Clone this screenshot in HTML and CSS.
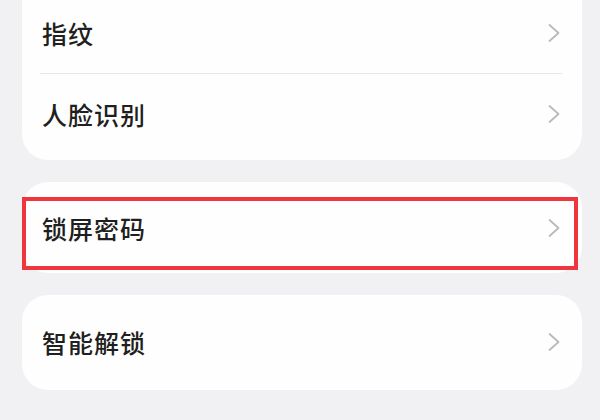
FILE: index.html
```html
<!DOCTYPE html>
<html>

<head>
    <title>安全设置</title>
    <link rel="stylesheet" href="styles.css">
</head>

<body>
    <div class="list">
        <div class="card card-top">
            <div class="row row-first">
                <span class="label">指纹</span>
                <svg class="chev" viewBox="0 0 14 20"><path d="M2.5 2 L11.5 10 L2.5 18" /></svg>
            </div>
            <div class="divider"></div>
            <div class="row row-second">
                <span class="label">人脸识别</span>
                <svg class="chev" viewBox="0 0 14 20"><path d="M2.5 2 L11.5 10 L2.5 18" /></svg>
            </div>
        </div>

        <div class="card card-mid">
            <div class="row row-lock">
                <span class="label">锁屏密码</span>
                <svg class="chev" viewBox="0 0 14 20"><path d="M2.5 2 L11.5 10 L2.5 18" /></svg>
            </div>
            <div class="mark"></div>
        </div>

        <div class="card card-last">
            <div class="row row-smart">
                <span class="label">智能解锁</span>
                <svg class="chev" viewBox="0 0 14 20"><path d="M2.5 2 L11.5 10 L2.5 18" /></svg>
            </div>
        </div>
    </div>
</body>

</html>
```

FILE: styles.css
```css
body {
    margin: 0;
    background-color: #f1f1f3;
    font-family: "Noto Sans CJK SC", "Noto Sans", sans-serif;
    overflow: hidden;
}

.list {
    display: flex;
    flex-direction: column;
    gap: 22px;
    padding: 0 18px 0 22px;
    margin-top: -3px;
}

.card {
    position: relative;
    background-color: #fefefe;
    border-radius: 26px;
}

.card-top {
    border-top-left-radius: 0;
    border-top-right-radius: 0;
}

.row {
    display: flex;
    align-items: center;
    justify-content: space-between;
    padding: 0 21px 0 20px;
}

.row-first {
    height: 76px;
    padding-bottom: 4px;
    box-sizing: border-box;
}

.row-second {
    height: 80px;
    padding-bottom: 6px;
}

.row-lock {
    height: 88px;
    padding-top: 2px;
    padding-bottom: 1px;
}

.row-smart {
    height: 94px;
    padding-bottom: 1px;
}

.label {
    font-size: 25px;
    font-weight: 500;
    color: #1f1f21;
    letter-spacing: 1px;
}

.chev {
    width: 14px;
    height: 20px;
    fill: none;
    stroke: #b9b9bc;
    stroke-width: 1.7;
    stroke-linecap: round;
    stroke-linejoin: round;
}

.divider {
    height: 1px;
    background-color: #e7e7ea;
    margin: 0 20px 0 18px;
}

.mark {
    position: absolute;
    left: 0;
    top: 15px;
    width: 556px;
    height: 73px;
    border: 4px solid #f0363d;
    box-sizing: border-box;
}
```
